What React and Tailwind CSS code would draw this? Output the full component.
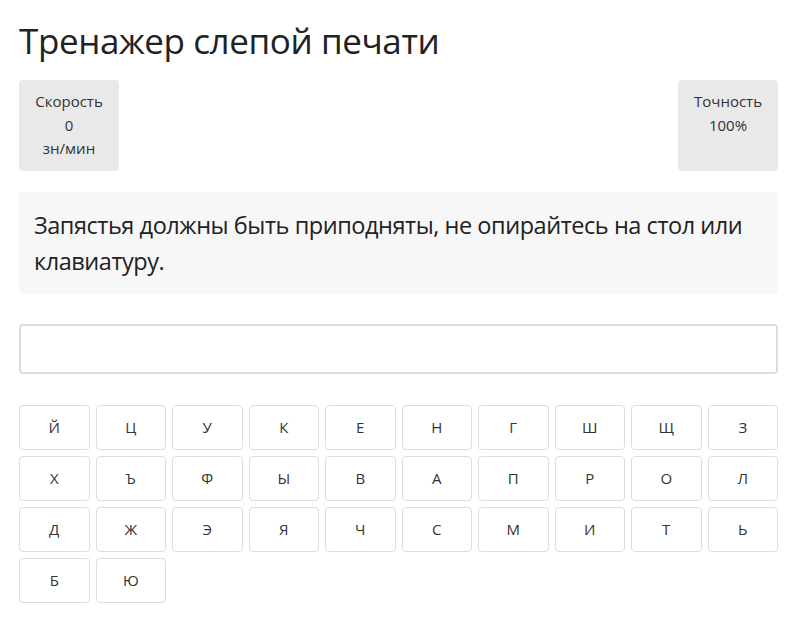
import React from "react";

const rows = [
  ["Й", "Ц", "У", "К", "Е", "Н", "Г", "Ш", "Щ", "З"],
  ["Х", "Ъ", "Ф", "Ы", "В", "А", "П", "Р", "О", "Л"],
  ["Д", "Ж", "Э", "Я", "Ч", "С", "М", "И", "Т", "Ь"],
  ["Б", "Ю"],
];

const keys = rows.flat();

const App = () => {
  return (
    <div className="bg-white pl-[19px] pr-[12px] pt-[21px] pb-[18px] text-[#222] font-['Open_Sans',sans-serif]">
      <h1 className="text-[35px] leading-[40px] font-normal tracking-[-0.4px]">
        Тренажер слепой печати
      </h1>

      <div className="mt-[19px] flex justify-between">
        <div className="w-[100px] h-[91px] rounded bg-[#e9e9e9] pt-[10px] text-center text-[15px] leading-[23.5px] text-[#333]">
          <div>Скорость</div>
          <div>0</div>
          <div>зн/мин</div>
        </div>
        <div className="w-[100px] h-[91px] rounded bg-[#e9e9e9] pt-[10px] text-center text-[15px] leading-[23.5px] text-[#333]">
          <div>Точность</div>
          <div>100%</div>
        </div>
      </div>

      <div className="mt-[21px] rounded bg-[#f7f7f7] px-[15px] py-[15px] text-[23.5px] leading-[36px] tracking-[-0.45px]">
        Запястья должны быть приподняты, не опирайтесь на стол или клавиатуру.
      </div>

      <input
        type="text"
        className="mt-[30px] block w-full h-[50px] rounded border-2 border-[#ddd] bg-white outline-none"
      />

      <div className="mt-[31px] grid grid-cols-10 gap-[6px]">
        {keys.map((k) => (
          <button
            key={k}
            className="h-[45px] rounded border border-[#ddd] bg-white text-[15px] text-[#333]"
          >
            {k}
          </button>
        ))}
      </div>
    </div>
  );
};

export default App;
